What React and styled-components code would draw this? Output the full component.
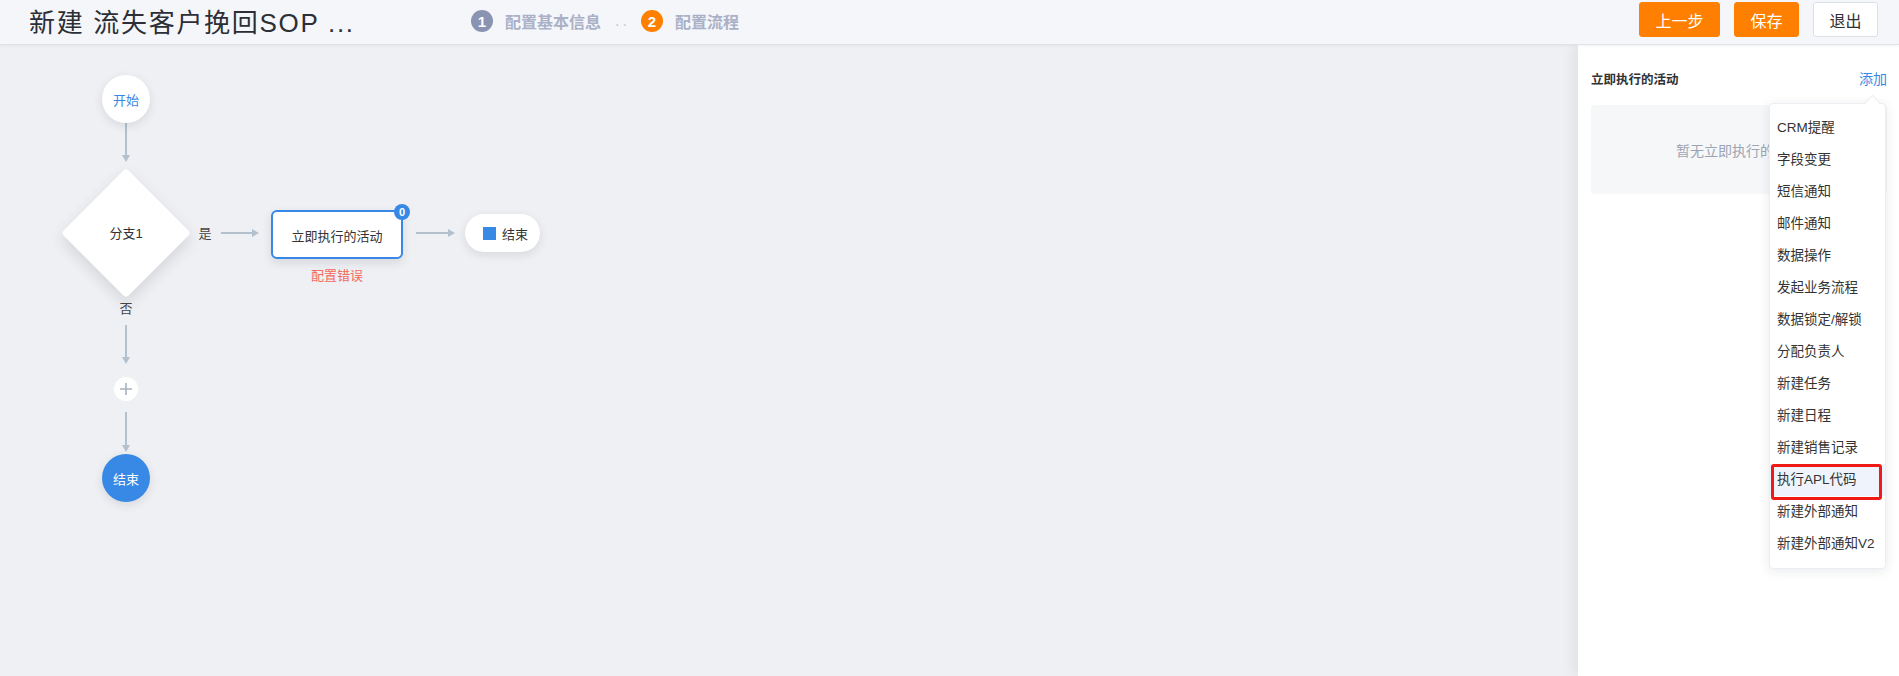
import React from "react";
import styled, { createGlobalStyle } from "styled-components";

const Global = createGlobalStyle`
  html, body { margin: 0; padding: 0; }
  body {
    font-family: "Liberation Sans", "Noto Sans CJK SC", sans-serif;
    color: #303133;
    background: #eff0f3;
  }
  * { box-sizing: border-box; }
`;

const Page = styled.div`
  width: 1899px;
  height: 676px;
  display: flex;
  flex-direction: column;
  overflow: hidden;
`;

const Header = styled.header`
  height: 45px;
  flex: none;
  display: flex;
  align-items: center;
  padding: 0 21px 0 29px;
  background: #f5f6fa;
  border-bottom: 1px solid #e0e2e7;
  box-shadow: 0 1px 3px rgba(0, 0, 0, 0.05);
  position: relative;
  z-index: 2;
`;

const Title = styled.h1`
  margin: 0;
  width: 442px;
  font-size: 26px;
  font-weight: 400;
  letter-spacing: 1.7px;
  color: #2c2f36;
  white-space: nowrap;
  line-height: 1;
  padding-top: 1px;
`;

const Steps = styled.div`
  display: flex;
  align-items: center;
  margin-top: -2px;
`;

const StepNum = styled.span`
  width: 22px;
  height: 22px;
  border-radius: 50%;
  background: ${(p) => (p.$active ? "#ff8000" : "#8a93b1")};
  color: #fff;
  font-size: 15px;
  font-weight: 700;
  display: flex;
  align-items: center;
  justify-content: center;
`;

const StepText = styled.span`
  margin-left: 12px;
  font-size: 16px;
  font-weight: 600;
  color: #aab1c7;
`;

const StepDots = styled.span`
  margin: 0 11px 0 14px;
  font-size: 16px;
  color: #c3c8d6;
  letter-spacing: 3px;
`;

const Actions = styled.div`
  margin-left: auto;
  display: flex;
  align-self: flex-start;
  margin-top: 2px;
  gap: 14px;
`;

const Button = styled.button`
  height: 35px;
  width: ${(p) => p.$w}px;
  border-radius: 3px;
  border: 1px solid ${(p) => (p.$primary ? "#ff8000" : "#dcdfe6")};
  background: ${(p) => (p.$primary ? "#ff8000" : "#ffffff")};
  color: ${(p) => (p.$primary ? "#ffffff" : "#303133")};
  font-family: inherit;
  font-size: 16px;
  padding: 0;
  cursor: pointer;
`;

const Body = styled.div`
  flex: 1;
  display: flex;
  min-height: 0;
`;

const Canvas = styled.main`
  flex: 1;
  position: relative;
  background: #eff0f3;
  overflow: hidden;
`;

const Edges = styled.svg`
  position: absolute;
  left: 0;
  top: 0;
  width: 100%;
  height: 100%;
  pointer-events: none;
`;

const Circle = styled.div`
  position: absolute;
  left: ${(p) => p.$x}px;
  top: ${(p) => p.$y}px;
  width: ${(p) => p.$size}px;
  height: ${(p) => p.$size}px;
  border-radius: 50%;
  background: ${(p) => (p.$filled ? "#3789e5" : "#ffffff")};
  color: ${(p) => (p.$filled ? "#ffffff" : "#3789e5")};
  box-shadow: 0 3px 10px rgba(40, 50, 70, 0.12);
  display: flex;
  align-items: center;
  justify-content: center;
  font-size: 13px;
`;

const PlusBtn = styled(Circle)`
  box-shadow: none;
  color: #a6b1bf;
`;

const DiamondWrap = styled.div`
  position: absolute;
  left: 61px;
  top: 122px;
  width: 130px;
  height: 131px;
  display: flex;
  align-items: center;
  justify-content: center;
`;

const DiamondShape = styled.div`
  position: absolute;
  width: 92px;
  height: 92px;
  background: #ffffff;
  border-radius: 4px;
  transform: rotate(45deg);
  box-shadow: 4px 4px 14px rgba(40, 50, 70, 0.14);
`;

const DiamondText = styled.span`
  position: relative;
  font-size: 13px;
  color: #333;
`;

const EdgeLabel = styled.span`
  position: absolute;
  left: ${(p) => p.$x}px;
  top: ${(p) => p.$y}px;
  transform: translate(-50%, -50%);
  font-size: 13px;
  color: #444;
`;

const ActivityNode = styled.div`
  position: absolute;
  left: 271px;
  top: 165px;
  width: 132px;
  height: 49px;
  border: 2px solid #3789e5;
  border-radius: 6px;
  background: #fff;
  box-shadow: 0 4px 10px rgba(40, 50, 70, 0.12);
  display: flex;
  align-items: center;
  justify-content: center;
  padding-top: 2px;
  font-size: 13px;
  color: #333;
`;

const Badge = styled.span`
  position: absolute;
  left: 121px;
  top: -8px;
  width: 16px;
  height: 16px;
  border-radius: 50%;
  background: #3789e5;
  color: #fff;
  font-size: 11px;
  font-weight: 700;
  display: flex;
  align-items: center;
  justify-content: center;
`;

const ErrorText = styled.span`
  position: absolute;
  left: 337px;
  top: 229px;
  transform: translate(-50%, -50%);
  font-size: 13px;
  color: #f46a5c;
`;

const EndPill = styled.div`
  position: absolute;
  left: 465px;
  top: 169px;
  width: 75px;
  height: 38px;
  border-radius: 19px;
  background: #fff;
  box-shadow: 0 3px 10px rgba(40, 50, 70, 0.12);
  display: flex;
  align-items: center;
  padding-left: 18px;
  gap: 6px;
  font-size: 13px;
  color: #333;
`;

const Square = styled.span`
  width: 13px;
  height: 13px;
  background: #3789e5;
`;

const Panel = styled.aside`
  width: 321px;
  flex: none;
  background: #fff;
  position: relative;
  padding: 24px 12px 0 13px;
  box-shadow: -5px 0 12px rgba(30, 40, 60, 0.07);
  z-index: 1;
`;

const PanelHead = styled.div`
  display: flex;
  align-items: center;
  justify-content: space-between;
  height: 18px;
`;

const PanelTitle = styled.span`
  font-size: 12.5px;
  font-weight: 600;
  color: #303133;
`;

const AddLink = styled.span`
  font-size: 14px;
  color: #3789e5;
  cursor: pointer;
`;

const Empty = styled.div`
  margin-top: 18px;
  height: 89px;
  border-radius: 4px;
  background: #f6f7f9;
  display: flex;
  align-items: center;
  justify-content: center;
  font-size: 14px;
  color: #9ca5b3;
`;

const Menu = styled.ul`
  position: absolute;
  left: 191px;
  top: 58px;
  width: 117px;
  margin: 0;
  padding: 8px 0;
  list-style: none;
  background: #fff;
  border: 1px solid #eceef3;
  border-radius: 4px;
  box-shadow: 0 2px 12px rgba(30, 40, 60, 0.1);
  &::before {
    content: "";
    position: absolute;
    left: 97px;
    top: -7px;
    width: 10px;
    height: 10px;
    background: #fff;
    border-left: 1px solid #eceef3;
    border-top: 1px solid #eceef3;
    transform: rotate(45deg);
  }
`;

const MenuItem = styled.li`
  position: relative;
  height: 32px;
  line-height: 32px;
  padding-left: 7px;
  font-size: 13.5px;
  color: #333;
  white-space: nowrap;
  background: ${(p) => (p.$hover ? "#eef3fc" : "transparent")};
`;

const Annotation = styled.span`
  position: absolute;
  left: 1px;
  top: 0;
  width: 111px;
  height: 36px;
  border: 3px solid #f01a14;
  border-radius: 3px;
  pointer-events: none;
`;

const items = [
  "CRM提醒",
  "字段变更",
  "短信通知",
  "邮件通知",
  "数据操作",
  "发起业务流程",
  "数据锁定/解锁",
  "分配负责人",
  "新建任务",
  "新建日程",
  "新建销售记录",
  "执行APL代码",
  "新建外部通知",
  "新建外部通知V2",
];

const LINE = "#b3c0cd";

function VArrow({ x, y1, y2 }) {
  return (
    <g>
      <line x1={x} y1={y1} x2={x} y2={y2 - 6} stroke={LINE} strokeWidth="2" />
      <polygon points={`${x - 4},${y2 - 7} ${x + 4},${y2 - 7} ${x},${y2}`} fill={LINE} />
    </g>
  );
}

function HArrow({ y, x1, x2 }) {
  return (
    <g>
      <line x1={x1} y1={y} x2={x2 - 6} y2={y} stroke={LINE} strokeWidth="2" />
      <polygon points={`${x2 - 7},${y - 4} ${x2 - 7},${y + 4} ${x2},${y}`} fill={LINE} />
    </g>
  );
}

export default function App() {
  return (
    <Page>
      <Global />
      <Header>
        <Title>新建 流失客户挽回SOP ...</Title>
        <Steps>
          <StepNum>1</StepNum>
          <StepText>配置基本信息</StepText>
          <StepDots>..</StepDots>
          <StepNum $active>2</StepNum>
          <StepText>配置流程</StepText>
        </Steps>
        <Actions>
          <Button $primary $w={81}>上一步</Button>
          <Button $primary $w={65}>保存</Button>
          <Button $w={65}>退出</Button>
        </Actions>
      </Header>
      <Body>
        <Canvas>
          <Edges>
            <VArrow x={126} y1={78} y2={117} />
            <HArrow y={188} x1={221} x2={259} />
            <HArrow y={188} x1={416} x2={455} />
            <VArrow x={126} y1={280} y2={319} />
            <VArrow x={126} y1={367} y2={407} />
          </Edges>
          <Circle $x={102} $y={30} $size={48}>开始</Circle>
          <DiamondWrap>
            <DiamondShape />
            <DiamondText>分支1</DiamondText>
          </DiamondWrap>
          <EdgeLabel $x={205} $y={187}>是</EdgeLabel>
          <EdgeLabel $x={126} $y={262}>否</EdgeLabel>
          <ActivityNode>
            立即执行的活动
            <Badge>0</Badge>
          </ActivityNode>
          <ErrorText>配置错误</ErrorText>
          <EndPill>
            <Square />
            结束
          </EndPill>
          <PlusBtn $x={114} $y={332} $size={24}>
            <svg width="14" height="14" viewBox="0 0 14 14">
              <path d="M7 1v12M1 7h12" stroke="#a6b1bf" strokeWidth="1.6" />
            </svg>
          </PlusBtn>
          <Circle $x={102} $y={409} $size={48} $filled>结束</Circle>
        </Canvas>
        <Panel>
          <PanelHead>
            <PanelTitle>立即执行的活动</PanelTitle>
            <AddLink>添加</AddLink>
          </PanelHead>
          <Empty>暂无立即执行的活动</Empty>
          <Menu>
            {items.map((t) => (
              <MenuItem key={t} $hover={t === "执行APL代码"}>
                {t}
                {t === "执行APL代码" && <Annotation />}
              </MenuItem>
            ))}
          </Menu>
        </Panel>
      </Body>
    </Page>
  );
}
